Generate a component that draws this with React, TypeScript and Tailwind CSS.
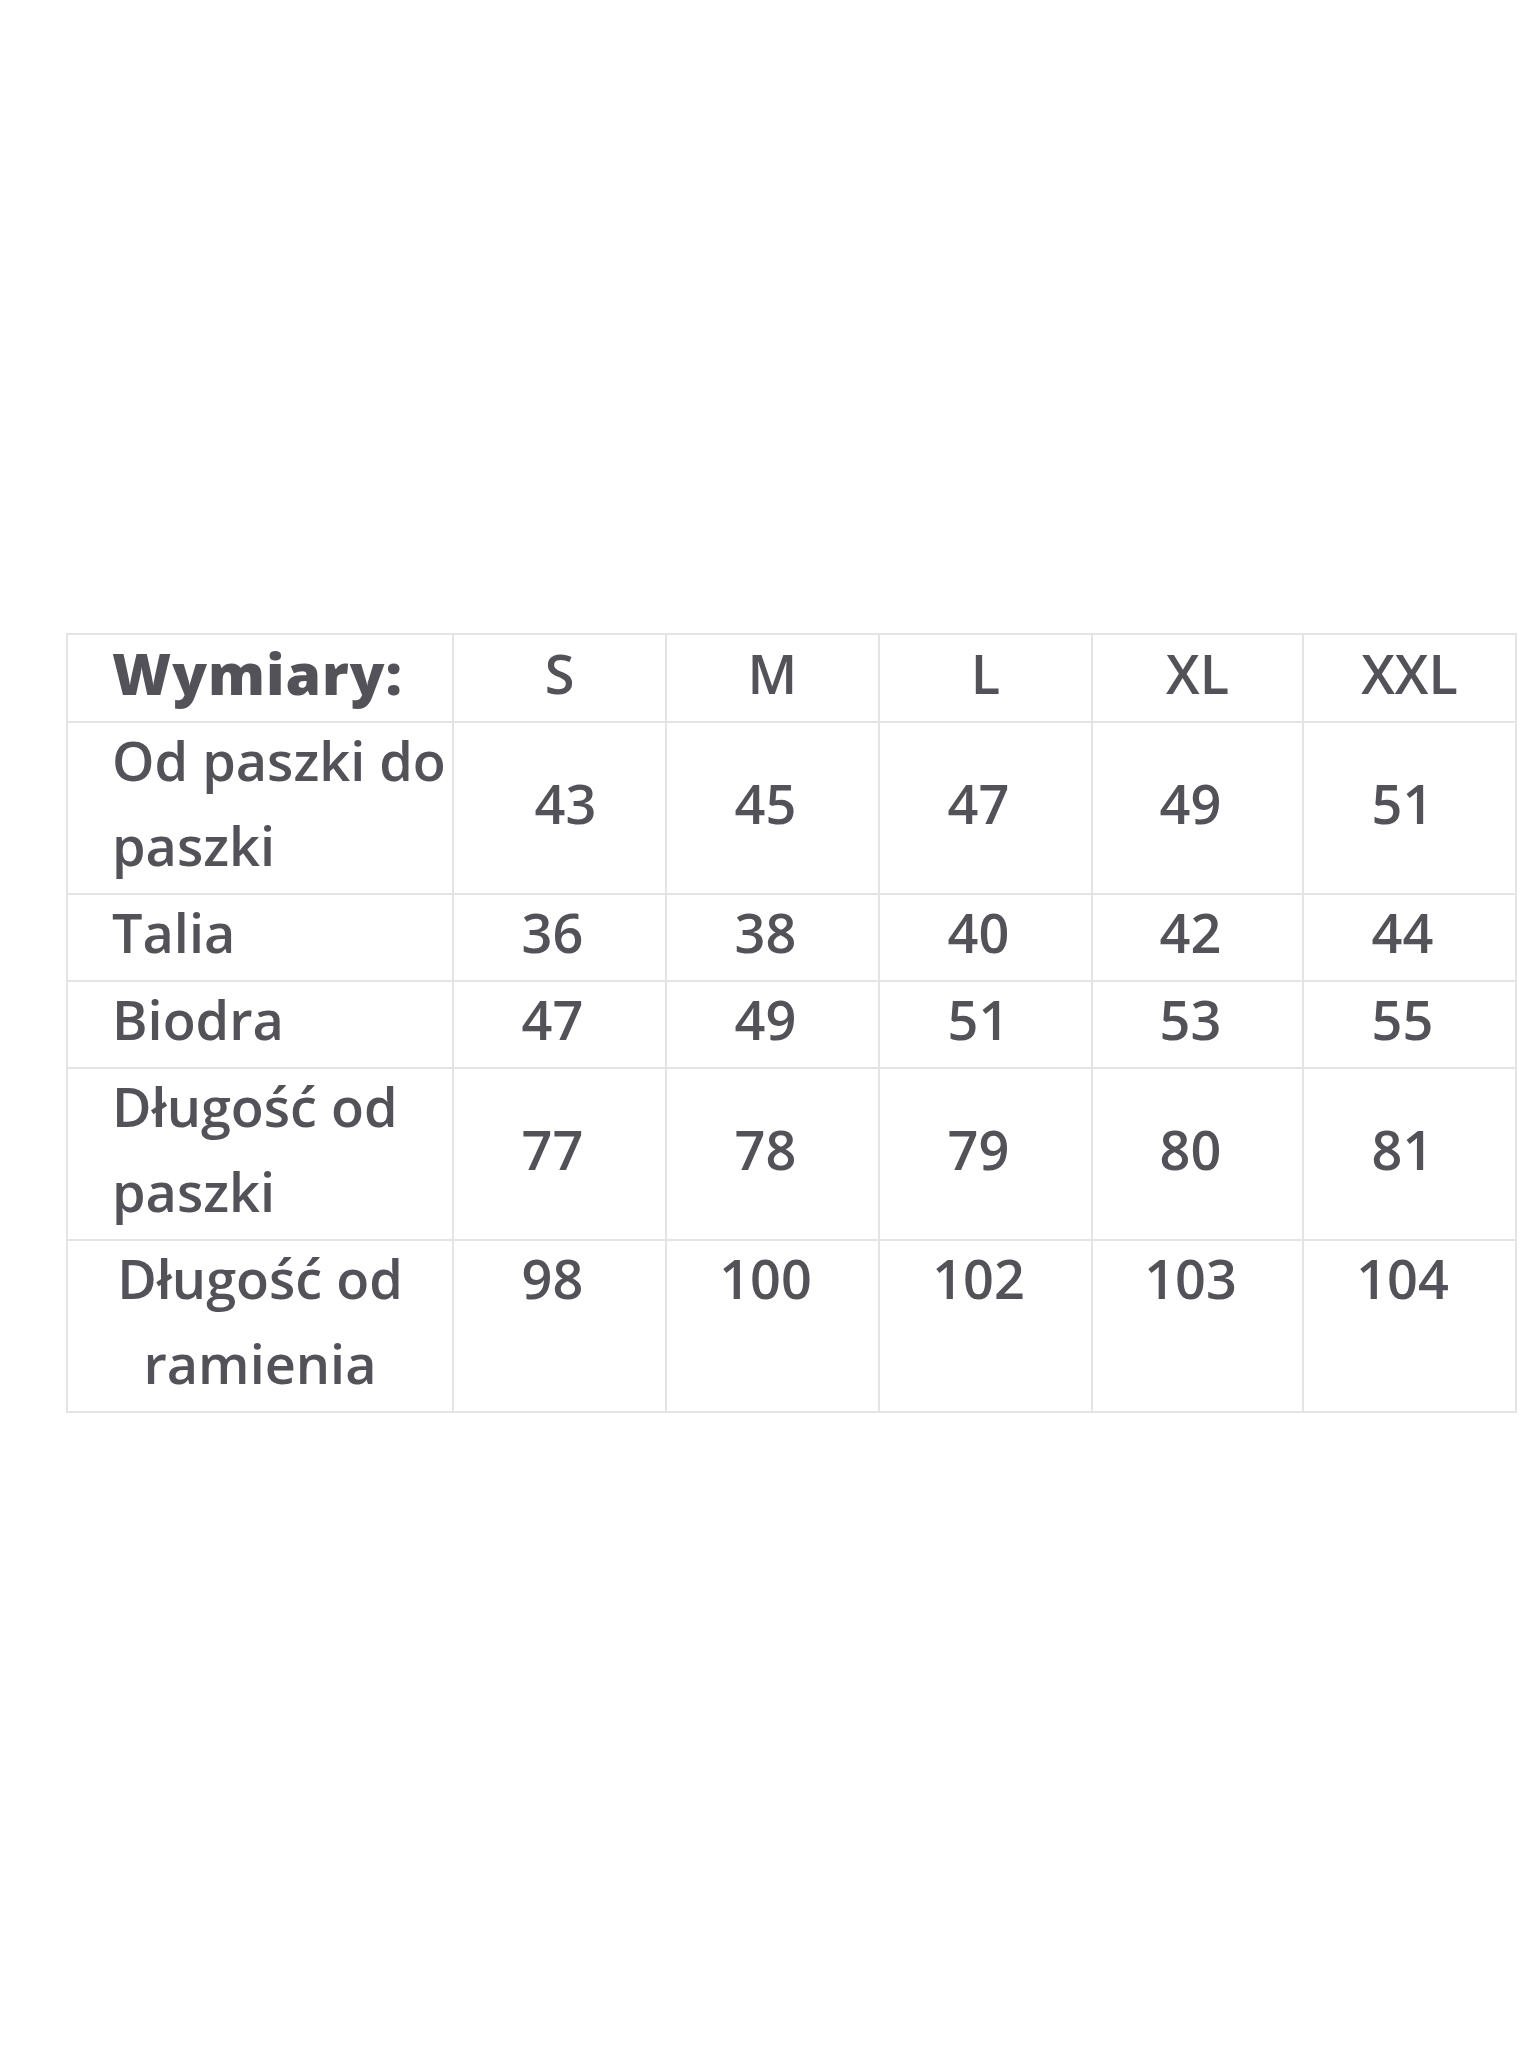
import React from "react";

const sizes = ["S", "M", "L", "XL", "XXL"];

type Row = { label: React.ReactNode; values: string[]; center?: boolean; top?: boolean; firstShift?: boolean };

const rows: Row[] = [
  { label: <>Od paszki do<br />paszki</>, values: ["43", "45", "47", "49", "51"], firstShift: true },
  { label: "Talia", values: ["36", "38", "40", "42", "44"] },
  { label: "Biodra", values: ["47", "49", "51", "53", "55"] },
  { label: <>Długość od<br />paszki</>, values: ["77", "78", "79", "80", "81"] },
  { label: <>Długość od<br />ramienia</>, values: ["98", "100", "102", "103", "104"], center: true, top: true },
];

const colW = ["w-[386px]", "w-[213px]", "w-[213px]", "w-[213px]", "w-[211px]", "w-[213px]"];

export default function App() {
  return (
    <div className="min-h-[2048px] w-full bg-white pt-[633px] pl-[66px]">
      <table
        className="border-collapse border-2 border-[#e4e4e6] text-[#525258] text-[54px] leading-[85px] table-fixed"
        style={{ fontFamily: "'Open Sans', 'Noto Sans', sans-serif" }}
      >
        <colgroup>
          {colW.map((c, i) => (
            <col key={i} className={c} />
          ))}
        </colgroup>
        <tbody>
          <tr className="h-[88px]">
            <td className="border-2 border-[#e4e4e6] pl-[44px] p-0 text-[57px] font-extrabold tracking-[1px] align-middle whitespace-nowrap">
              <div className="-translate-y-[5px]">Wymiary:</div>
            </td>
            {sizes.map((s) => (
              <td key={s} className="border-2 border-[#e4e4e6] p-0 text-center align-middle font-semibold">
                <div className="-translate-y-[5px]">{s}</div>
              </td>
            ))}
          </tr>
          {rows.map((r, ri) => (
            <tr key={ri}>
              <td
                className={
                  "border-2 border-[#e4e4e6] p-0 font-semibold whitespace-nowrap align-middle " +
                  (r.center ? "text-center" : "pl-[44px] text-left")
                }
              >
                <div className="-translate-y-[5px]">{r.label}</div>
              </td>
              {r.values.map((v, vi) => (
                <td
                  key={vi}
                  className={
                    "border-2 border-[#e4e4e6] p-0 text-center font-semibold " +
                    (r.top ? "align-top " : "align-middle ") +
                    (r.firstShift && vi === 0 ? "pl-[12px]" : "pr-[14px]")
                  }
                >
                  <div className="-translate-y-[5px]">{v}</div>
                </td>
              ))}
            </tr>
          ))}
        </tbody>
      </table>
    </div>
  );
}
